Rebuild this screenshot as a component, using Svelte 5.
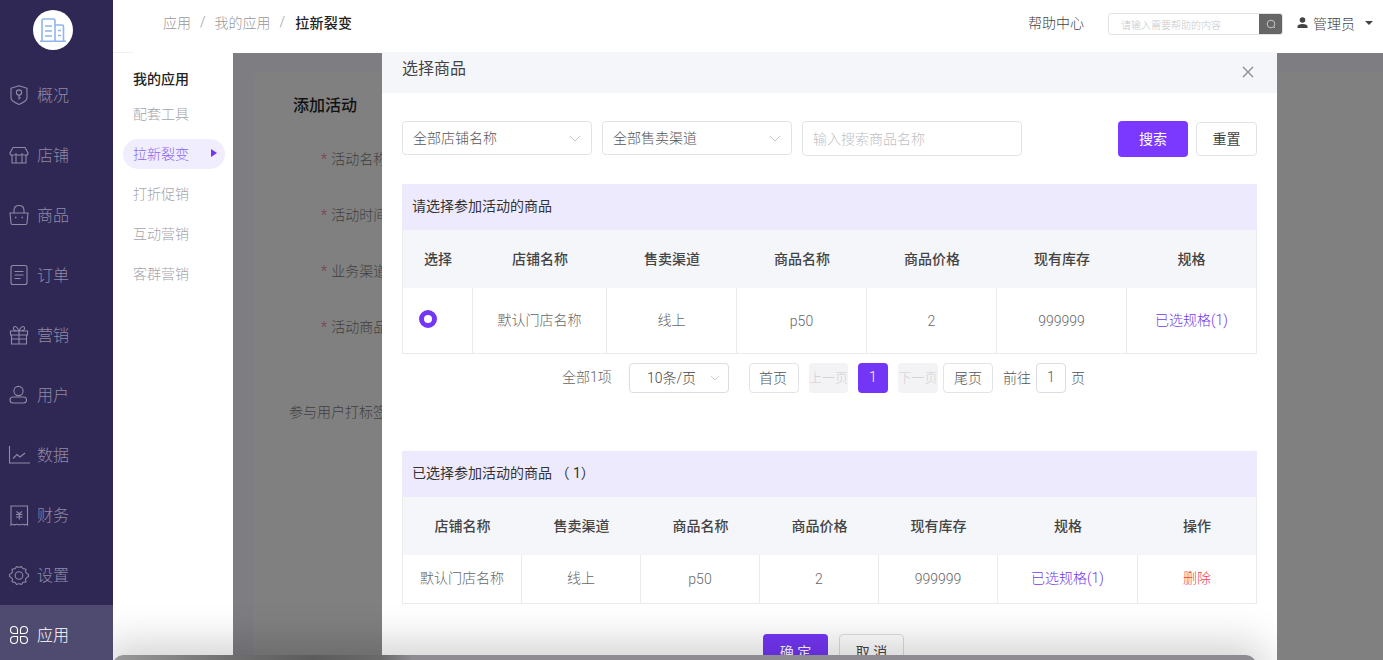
<script>
  const nav = [
    { label: '概况', icon: 'shield' },
    { label: '店铺', icon: 'store' },
    { label: '商品', icon: 'bag' },
    { label: '订单', icon: 'order' },
    { label: '营销', icon: 'gift' },
    { label: '用户', icon: 'user' },
    { label: '数据', icon: 'chart' },
    { label: '财务', icon: 'bill' },
    { label: '设置', icon: 'gear' },
    { label: '应用', icon: 'apps', active: true }
  ];
  const sub = ['配套工具', '拉新裂变', '打折促销', '互动营销', '客群营销'];
  const head1 = ['选择', '店铺名称', '售卖渠道', '商品名称', '商品价格', '现有库存', '规格'];
  const head2 = ['店铺名称', '售卖渠道', '商品名称', '商品价格', '现有库存', '规格', '操作'];
  const formRows = ['活动名称', '活动时间', '业务渠道', '活动商品'];
</script>

<div class="page">
  <aside class="side">
    <div class="logo">
      <svg width="26" height="24" viewBox="0 0 26 24" fill="none" stroke="#8fb4ee" stroke-width="1.600">
        <path d="M2 23V2.500Q2 1 3.500 1H13.500Q15 1 15 2.500V23M15 7H22Q23.500 7 23.500 8.500V23M0 23.200H26" />
        <path d="M5 8H12M5 13H12M5 18H12M18 12.500H21M18 17.500H21" />
      </svg>
    </div>
    <nav class="nav">
      {#each nav as n}
        <div class="nav-item" class:active={n.active}>
          <svg class="ico" viewBox="0 0 20 20" fill="none" stroke="currentColor" stroke-width="1.100">
            {#if n.icon === 'shield'}
              <path d="M10 0.700L18 3.200V13Q18 16 10 19.500Q2 16 2 13V3.200Z" stroke-linejoin="round" /><circle cx="10" cy="7.500" r="2.600" /><path d="M10 10.100V14.500M10 12.800H11.800" />
            {:else if n.icon === 'store'}
              <path d="M4 2.500H16L19 8Q19 10.300 16.500 10.300Q14 10.300 13 8.800Q11.500 10.300 10 10.300Q8.500 10.300 7 8.800Q6 10.300 3.500 10.300Q1 10.300 1 8ZM3 10.300V18H17V10.300M7 10V18M13 10V18" />
            {:else if n.icon === 'bag'}
              <path d="M1 8H19L18 18Q18 19.500 16.500 19.500H3.500Q2 19.500 2 18ZM5 8V5.500Q5 0.500 10 0.500Q15 0.500 15 5.500V8" /><path d="M6 12.500H7.400M12.600 12.500H14" stroke-width="1.400" />
            {:else if n.icon === 'order'}
              <rect x="2" y="0.500" width="16" height="19" rx="2" /><path d="M5.500 6.500H14.500M5.500 10H14.500M5.500 13.500H11.500" />
            {:else if n.icon === 'gift'}
              <path d="M1.500 6H18.500V10H1.500ZM2.500 10V19H17.500V10M10 6V19M10 6Q3.500 6 4.500 2.500Q7 -0.500 10 6Q13 -0.500 15.500 2.500Q16.500 6 10 6M2.500 14H17.500" />
            {:else if n.icon === 'user'}
              <circle cx="9.500" cy="6" r="4.600" /><rect x="1" y="12" width="16.500" height="6" rx="3" />
            {:else if n.icon === 'chart'}
              <path d="M0.500 1V18H21" /><path d="M4 13.500L8 9.500L11 12L16 8" />
            {:else if n.icon === 'bill'}
              <path d="M2 1H18.500V20Q17 18.500 15.500 20Q13.500 18.500 10.500 20Q7.500 18.500 5.500 20Q3.500 18.500 2 20Z" /><path d="M7.500 6.500L10.300 8.700L13 6.500M7 9.500H13.500M7 12H13.500M10.300 8.700V14.500" />
            {:else if n.icon === 'gear'}
              <path d="M7.500 1.500Q10 3 12.500 1.500L14 3.800Q16 3.600 17 4.500L16.500 7Q17.500 8.500 19.500 9.500V11.500Q17.500 12.500 16.500 14L17 16.500Q16 17.400 14 17.200L12.500 19.500Q10 18 7.500 19.500L6 17.200Q4 17.400 3 16.500L3.500 14Q2.500 12.500 0.500 11.500V9.500Q2.500 8.500 3.500 7L3 4.500Q4 3.600 6 3.800Z" stroke-linejoin="round" /><circle cx="10" cy="10.500" r="3.800" />
            {:else}
              <path d="M8.500 8.500V5Q8.500 1.500 5 1.500Q1.500 1.500 1.500 5Q1.500 8.500 5 8.500ZM11.500 8.500V5Q11.500 1.500 15 1.500Q18.500 1.500 18.500 5Q18.500 8.500 15 8.500ZM8.500 11.500V15Q8.500 18.500 5 18.500Q1.500 18.500 1.500 15Q1.500 11.500 5 11.500ZM11.500 11.500V15Q11.500 18.500 15 18.500Q18.500 18.500 18.500 15Q18.500 11.500 15 11.500Z" />
            {/if}
          </svg>
          <span>{n.label}</span>
        </div>
      {/each}
    </nav>
  </aside>

  <div class="main">
    <header class="top">
      <div class="crumbs">
        <span>应用</span><i>/</i><span>我的应用</span><i>/</i><b>拉新裂变</b>
      </div>
      <span class="help">帮助中心</span>
      <div class="help-search">
        <span class="hs-text">请输入需要帮助的内容</span>
        <span class="hs-btn">
          <svg width="10" height="10" viewBox="0 0 10 10" fill="none" stroke="#cfcfcf" stroke-width="0.900"><circle cx="5" cy="5" r="3.800" /><path d="M7.800 7.800L9 9" /></svg>
        </span>
      </div>
      <div class="account">
        <svg width="11" height="11" viewBox="0 0 11 11" fill="#444"><circle cx="5.500" cy="3" r="2.800" /><path d="M0.500 11V9.500Q0.500 7 5.500 7Q10.500 7 10.500 9.500V11Z" /></svg>
        <span>管理员</span>
        <em class="caret"></em>
      </div>
    </header>

    <div class="below">
      <div class="submenu">
        <div class="sub-title">我的应用</div>
        {#each sub as s, i}
          <div class="sub-item" class:on={i === 1}>
            <span>{s}</span>
            {#if i === 1}<em class="tri"></em>{/if}
          </div>
        {/each}
      </div>

      <div class="content">
        <div class="card">
          <h2>添加活动</h2>
          <div class="form">
            {#each formRows as f}
              <div class="form-row"><em>*</em> {f}</div>
            {/each}
          </div>
          <div class="tag-row">参与用户打标签</div>
        </div>
      </div>
    </div>
  </div>

  <div class="modal">
    <div class="m-head">
      <span>选择商品</span>
      <svg width="12" height="12" viewBox="0 0 12 12" stroke="#8e8e93" stroke-width="1.400"><path d="M1 1L11 11M11 1L1 11" /></svg>
    </div>
    <div class="m-body">
      <div class="filters">
        <div class="select"><span>全部店铺名称</span><svg class="chev" viewBox="0 0 12 7" fill="none" stroke="#c4c6cc"><path d="M1 1L6 6L11 1" /></svg></div>
        <div class="select"><span>全部售卖渠道</span><svg class="chev" viewBox="0 0 12 7" fill="none" stroke="#c4c6cc"><path d="M1 1L6 6L11 1" /></svg></div>
        <div class="input">输入搜索商品名称</div>
        <div class="spacer"></div>
        <button class="btn-primary">搜索</button>
        <button class="btn-plain">重置</button>
      </div>

      <div class="sec-title">请选择参加活动的商品</div>
      <div class="tbl t1">
        {#each head1 as h}<div class="th">{h}</div>{/each}
        <div class="td"><span class="radio"></span></div>
        <div class="td">默认门店名称</div>
        <div class="td">线上</div>
        <div class="td n">p50</div>
        <div class="td n">2</div>
        <div class="td n">999999</div>
        <div class="td link">已选规格(1)</div>
      </div>

      <div class="pager">
        <span class="total">全部1项</span>
        <div class="psize"><span>10条/页</span><svg class="chev small" viewBox="0 0 12 7" fill="none" stroke="#c4c6cc"><path d="M1 1L6 6L11 1" /></svg></div>
        <span class="pb first">首页</span>
        <span class="pb off w39">上一页</span>
        <span class="pb cur">1</span>
        <span class="pb off w40">下一页</span>
        <span class="pb last">尾页</span>
        <span class="goto">前往</span>
        <span class="pb num">1</span>
        <span class="goto">页</span>
      </div>

      <div class="sec-title second">已选择参加活动的商品 （ 1）</div>
      <div class="tbl t2">
        {#each head2 as h}<div class="th">{h}</div>{/each}
        <div class="td">默认门店名称</div>
        <div class="td">线上</div>
        <div class="td n">p50</div>
        <div class="td n">2</div>
        <div class="td n">999999</div>
        <div class="td link">已选规格(1)</div>
        <div class="td del">删除</div>
      </div>

      <div class="m-foot">
        <button class="f-ok">确 定</button>
        <button class="f-no">取 消</button>
      </div>
    </div>
  </div>

  <div class="dock"></div>
</div>

<style>
  :global(body) { margin: 0; }
  .page {
    position: relative;
    display: flex;
    width: 1383px;
    height: 660px;
    overflow: hidden;
    background: #fff;
    font-family: Roboto, "Noto Sans CJK SC", sans-serif;
    font-size: 14px;
    font-weight: 300;
    color: #333;
  }
  .side {
    flex: 0 0 113px;
    background: #2f2855;
    display: flex;
    flex-direction: column;
    align-items: stretch;
  }
  .logo {
    align-self: center;
    width: 40px;
    height: 40px;
    margin-top: 10px;
    margin-left: -7px;
    border-radius: 50%;
    background: #fff;
    display: flex;
    align-items: center;
    justify-content: center;
  }
  .nav { margin-top: 15px; display: flex; flex-direction: column; }
  .nav-item {
    height: 60px;
    flex: none;
    display: flex;
    align-items: center;
    padding-left: 9px;
    gap: 8px;
    color: #8f8aa6;
    font-size: 16px;
  }
  .nav-item span { padding-bottom: 2px; }
  .nav-item .ico { width: 20px; height: 20px; flex: none; overflow: visible; }
  .nav-item.active {
    background: #4f4a70;
    color: #fff;
    height: 55px;
    padding-top: 5px;
    box-sizing: border-box;
  }
  .main { flex: 1; min-width: 0; display: flex; flex-direction: column; }
  .top {
    height: 53px;
    flex: none;
    box-sizing: border-box;
    display: flex;
    align-items: center;
    padding-left: 50px;
    padding-bottom: 5px;
    background: #fff;
    position: relative;
  }
  .top::after {
    content: "";
    position: absolute;
    left: 0;
    bottom: 0;
    width: 20px;
    height: 1px;
    background: #f0f0f2;
  }
  .crumbs {
    flex: 1;
    display: flex;
    align-items: center;
    gap: 9px;
    color: #999;
    font-size: 14px;
    padding-bottom: 4px;
  }
  .crumbs i { font-style: normal; }
  .crumbs b { color: #222; font-weight: 500; margin-left: 1px; letter-spacing: 0.25px; }
  .help { color: #444; font-size: 14px; margin-right: 24px; padding-bottom: 4px; }
  .help-search {
    width: 175px;
    height: 22px;
    box-sizing: border-box;
    border: 1px solid #e3e3e6;
    border-radius: 3px;
    display: flex;
    align-items: center;
    justify-content: space-between;
    overflow: hidden;
  }
  .hs-text { font-size: 10px; color: #c8c8cc; padding-left: 12px; }
  .hs-btn {
    width: 23px;
    height: 22px;
    background: #666;
    display: flex;
    align-items: center;
    justify-content: center;
  }
  .account {
    display: flex;
    align-items: center;
    margin-left: 14px;
    margin-right: 10px;
    width: 76px;
    gap: 5px;
    color: #444;
    padding-bottom: 3px;
  }
  .caret {
    width: 0; height: 0;
    margin-left: 5px;
    border-left: 4px solid transparent;
    border-right: 4px solid transparent;
    border-top: 4px solid #444;
  }
  .below { flex: 1; display: flex; min-height: 0; }
  .submenu { flex: 0 0 120px; padding-top: 16px; box-sizing: border-box; }
  .sub-title { padding-left: 20px; color: #222; font-weight: 500; font-size: 14px; line-height: 20px; margin-bottom: 10px; }
  .sub-item {
    height: 30px;
    box-sizing: border-box;
    margin: 10px 8px 10px 10px;
    padding: 0 10px 2px;
    border-radius: 15px;
    display: flex;
    align-items: center;
    justify-content: space-between;
    color: #a5a5ab;
    font-size: 14px;
  }
  .sub-item.on { background: #f0edfe; color: #8a64ee; }
  .tri {
    width: 0; height: 0;
    margin-right: -2px;
    border-top: 4px solid transparent;
    border-bottom: 4px solid transparent;
    border-left: 6px solid #7436f6;
  }
  .content { flex: 1; background: #7d7d82; padding: 20px 0 0 20px; }
  .card { background: #808080; height: 100%; padding: 21px 40px; box-sizing: border-box; color: #3f3f3f; }
  .card h2 { margin: 0; font-size: 16px; font-weight: 500; color: #111; line-height: 24px; }
  .form { margin-top: 31px; display: flex; flex-direction: column; gap: 36px; padding-left: 28px; }
  .form-row { line-height: 20px; white-space: nowrap; height: 20px; }
  .form-row em { color: #7c3a48; font-style: normal; margin-right: 1px; }
  .tag-row { margin-top: 64px; margin-left: -4px; }
  .modal {
    position: absolute;
    left: 382px;
    top: 52px;
    width: 895px;
    height: 641px;
    background: #fff;
    color: #333;
  }
  .m-head {
    height: 41px;
    background: #f5f6fa;
    display: flex;
    align-items: center;
    justify-content: space-between;
    padding: 0 23px 0 20px;
    font-size: 16px;
    font-weight: 400;
    color: #444;
  }
  .m-head span { margin-top: -11px; }
  .m-head svg { margin-top: -1px; }
  .m-body { padding: 28px 20px 0; }
  .filters { display: flex; align-items: flex-start; gap: 10px; height: 36px; }
  .select, .input {
    box-sizing: border-box;
    height: 34px;
    width: 190px;
    border: 1px solid #e2e3e8;
    border-radius: 4px;
    display: flex;
    align-items: center;
    justify-content: space-between;
    padding: 0 10px;
    color: #555;
  }
  .select span { padding-bottom: 3px; }
  .input { width: 220px; height: 35px; padding-bottom: 2px; color: #c0c0c5; }
  .chev { width: 12px; height: 7px; }
  .chev.small { width: 10px; height: 6px; }
  .spacer { flex: 1; }
  button { font-family: inherit; margin: 0; cursor: pointer; padding: 0 0 2px; }
  .btn-primary {
    width: 70px; height: 36px;
    background: #7b39ff;
    border: none;
    border-radius: 4px;
    color: #fff;
    font-size: 14px;
    font-weight: 400;
  }
  .btn-plain {
    margin: 1px 0 0 -2px;
    width: 61px; height: 34px;
    background: #fff;
    border: 1px solid #e2e3e8;
    border-radius: 4px;
    color: #444;
    font-size: 14px;
    font-weight: 400;
  }
  .sec-title {
    margin-top: 27px;
    height: 46px;
    box-sizing: border-box;
    background: #eeeafe;
    display: flex;
    align-items: center;
    padding: 0 0 4px 10px;
    font-weight: 400;
    font-size: 14px;
    color: #333;
  }
  .sec-title.second { margin-top: 58px; }
  .tbl { display: grid; border-bottom: 1px solid #ebebee; border-left: 1px solid #ebebee; border-right: 1px solid #ebebee; box-sizing: border-box; }
  .t1 { grid-template-columns: 70px 134px 130px 130px 130px 130px 1fr; grid-template-rows: 58px 65px; }
  .t2 { grid-template-columns: 119px 119px 119px 119px 119px 140px 1fr; grid-template-rows: 58px 48px; }
  .th {
    background: #f5f6fa;
    padding-bottom: 2px;
    box-sizing: border-box;
    display: flex;
    align-items: center;
    justify-content: center;
    font-weight: 500;
    color: #444;
  }
  .td {
    display: flex;
    align-items: center;
    justify-content: center;
    color: #666;
    border-right: 1px solid #ebebee;
    padding-bottom: 4px;
    box-sizing: border-box;
  }
  .td.n { padding-bottom: 0; }
  .td:last-child { border-right: none; }
  .link { color: #7339e8; }
  .del { color: #f2434a; }
  .radio {
    width: 18px; height: 18px;
    box-sizing: border-box;
    border: 5px solid #7436f6;
    border-radius: 50%;
    margin: 1px 19px 0 0;
  }
  .pager { display: flex; align-items: center; height: 30px; margin-top: 9px; padding-left: 160px; }
  .total { color: #666; width: 67px; padding-bottom: 4px; }
  .psize {
    box-sizing: border-box;
    width: 100px; height: 30px;
    border: 1px solid #dcdde2;
    border-radius: 4px;
    display: flex;
    align-items: center;
    justify-content: space-between;
    padding: 0 8px 0 17px;
    color: #444;
  }
  .psize span { padding-bottom: 3px; }
  .pb {
    box-sizing: border-box;
    height: 30px;
    border: 1px solid #e2e3e8;
    border-radius: 4px;
    padding-bottom: 3px;
    display: flex;
    align-items: center;
    justify-content: center;
    color: #555;
  }
  .first { width: 50px; margin-left: 20px; padding-right: 2px; }
  .off { background: #f3f3f5; border: none; color: #cfcfd3; font-size: 13px; }
  .w39 { width: 39px; margin-left: 10px; }
  .cur { width: 30px; margin-left: 10px; background: #7436f6; border: none; color: #fff; }
  .w40 { width: 40px; margin-left: 10px; }
  .last { width: 50px; margin-left: 5px; }
  .goto { margin-left: 5px; color: #555; padding-bottom: 3px; }
  .goto:nth-last-child(3) { margin-left: 10px; }
  .num { width: 30px; margin-left: 5px; border-color: #dcdde2; }
  .m-foot { display: flex; justify-content: center; gap: 11px; margin-top: 30px; padding-left: 8px; }
  .f-ok, .f-no {
    width: 65px; height: 36px;
    border-radius: 4px;
    font-size: 14px;
    font-weight: 400;
  }
  .f-ok { background: #7436f6; color: #fff; border: none; }
  .f-no { background: #fff; border: 1px solid #dcdde2; color: #444; }
  .dock {
    position: absolute;
    left: 113px;
    width: 1143px;
    top: 655px;
    height: 30px;
    border-radius: 10px 10px 0 0;
    background: linear-gradient(90deg, #9a9a9a 0, #6e6e6e 120px, #5c5c5c 200px, #6a6a6a 269px, #8e8c92 300px, #8e8c92 100%);
    box-shadow: 0 0 40px 12px rgba(0, 0, 0, 0.18);
    clip-path: inset(-60px -21px 0 0);
  }
</style>
